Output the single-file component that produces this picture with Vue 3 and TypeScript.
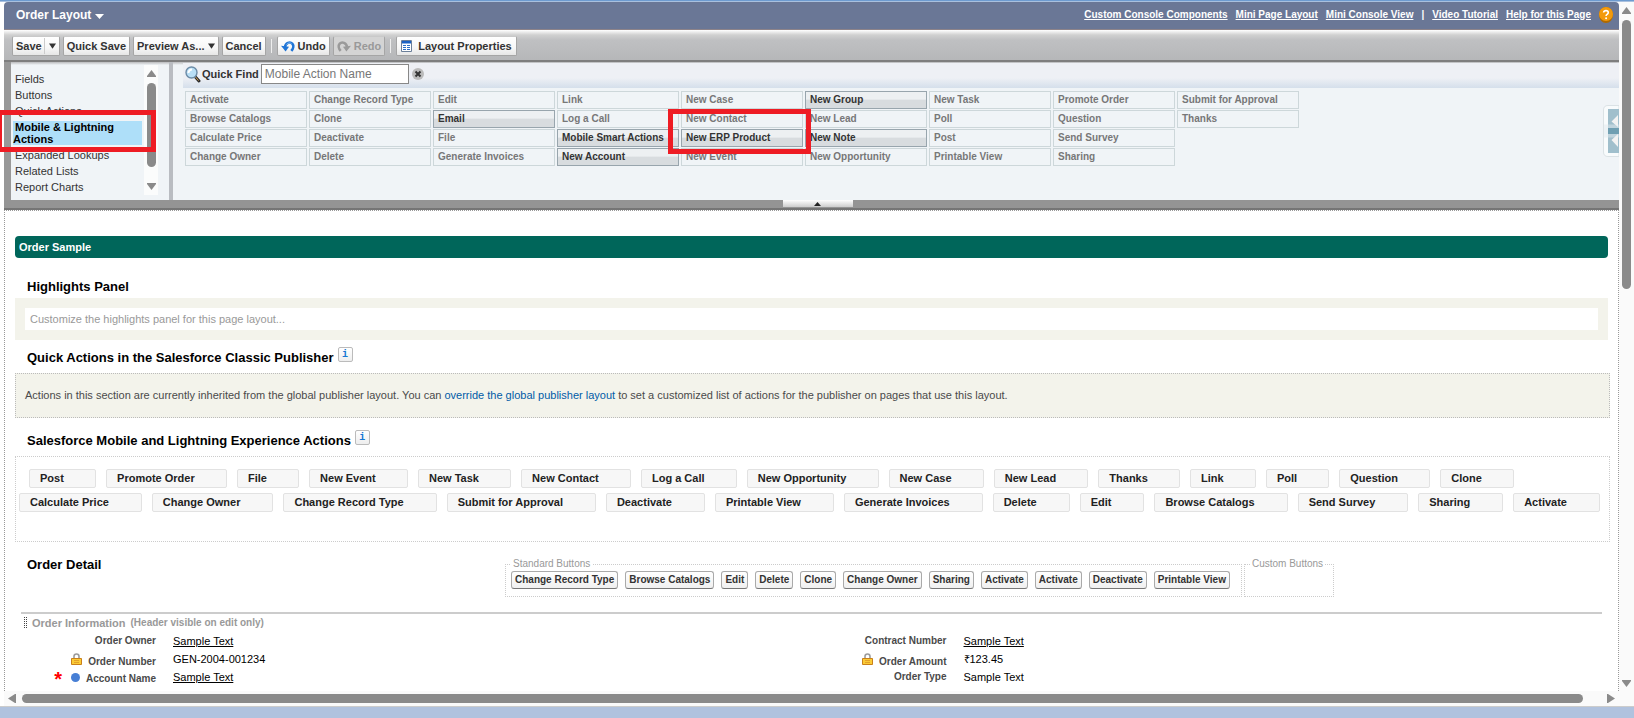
<script setup lang="ts">
import { ref } from 'vue'

interface PaletteItem {
  label: string
  available?: boolean
}

interface Field {
  label: string
  value: string
  link?: boolean
  locked?: boolean
  required?: boolean
}

const search = ref('')

const helpLinks = ['Custom Console Components', 'Mini Page Layout', 'Mini Console View']
const guideLinks = ['Video Tutorial', 'Help for this Page']

const categoriesBefore = ['Fields', 'Buttons', 'Quick Actions']
const categoriesAfter = ['Expanded Lookups', 'Related Lists', 'Report Charts']

const palette: PaletteItem[] = [
  { label: 'Activate' },
  { label: 'Browse Catalogs' },
  { label: 'Calculate Price' },
  { label: 'Change Owner' },
  { label: 'Change Record Type' },
  { label: 'Clone' },
  { label: 'Deactivate' },
  { label: 'Delete' },
  { label: 'Edit' },
  { label: 'Email', available: true },
  { label: 'File' },
  { label: 'Generate Invoices' },
  { label: 'Link' },
  { label: 'Log a Call' },
  { label: 'Mobile Smart Actions', available: true },
  { label: 'New Account', available: true },
  { label: 'New Case' },
  { label: 'New Contact' },
  { label: 'New ERP Product', available: true },
  { label: 'New Event' },
  { label: 'New Group', available: true },
  { label: 'New Lead' },
  { label: 'New Note', available: true },
  { label: 'New Opportunity' },
  { label: 'New Task' },
  { label: 'Poll' },
  { label: 'Post' },
  { label: 'Printable View' },
  { label: 'Promote Order' },
  { label: 'Question' },
  { label: 'Send Survey' },
  { label: 'Sharing' },
  { label: 'Submit for Approval' },
  { label: 'Thanks' },
]

const firstActions = [
  'Post', 'Promote Order', 'File', 'New Event', 'New Task', 'New Contact', 'Log a Call',
  'New Opportunity', 'New Case', 'New Lead', 'Thanks', 'Link', 'Poll', 'Question', 'Clone',
]
const secondActions = [
  'Calculate Price', 'Change Owner', 'Change Record Type', 'Submit for Approval', 'Deactivate',
  'Printable View', 'Generate Invoices', 'Delete', 'Edit', 'Browse Catalogs', 'Send Survey',
  'Sharing', 'Activate',
]

const standardButtons = [
  'Change Record Type', 'Browse Catalogs', 'Edit', 'Delete', 'Clone', 'Change Owner', 'Sharing',
  'Activate', 'Activate', 'Deactivate', 'Printable View',
]

const leftFields: Field[] = [
  { label: 'Order Owner', value: 'Sample Text', link: true },
  { label: 'Order Number', value: 'GEN-2004-001234', locked: true },
  { label: 'Account Name', value: 'Sample Text', link: true, required: true },
]
const rightFields: Field[] = [
  { label: 'Contract Number', value: 'Sample Text', link: true },
  { label: 'Order Amount', value: '₹123.45', locked: true },
  { label: 'Order Type', value: 'Sample Text' },
]
const columns = [leftFields, rightFields]
</script>

<template>
  <div class="window">
    <div class="strip"></div>
    <div class="viewport">
      <div class="page">
        <header class="editor">
          <div class="titlebar">
            <button class="title" type="button">
              Order Layout
              <svg width="9" height="5" viewBox="0 0 9 5"><path d="M0 0h9L4.500 5z" fill="#fff" /></svg>
            </button>
            <nav class="help">
              <a v-for="l in helpLinks" :key="l" href="#">{{ l }}</a>
              <span>|</span>
              <a v-for="l in guideLinks" :key="l" href="#">{{ l }}</a>
              <svg class="help-icon" width="14" height="16" viewBox="0 0 14 16">
                <ellipse cx="7" cy="8" rx="7" ry="8" fill="#b06a00" />
                <ellipse cx="7" cy="7" rx="7" ry="7" fill="#f39a0b" />
                <path d="M4.600 5.500Q4.800 3.600 7 3.600T9.300 5.600Q9.300 6.800 8 7.400Q7.100 7.900 7.100 9" fill="none" stroke="#fff" stroke-width="1.600" />
                <circle cx="7.100" cy="11.200" r="1" fill="#fff" />
              </svg>
            </nav>
          </div>

          <div class="toolbar">
            <div class="split">
              <button type="button">Save</button>
              <button type="button" aria-label="More save options">
                <svg width="7" height="6" viewBox="0 0 8 6"><path d="M0 0h8L4 6z" fill="#333" /></svg>
              </button>
            </div>
            <button class="tool" type="button">Quick Save</button>
            <button class="tool" type="button">
              Preview As...
              <svg width="7" height="6" viewBox="0 0 8 6"><path d="M0 0h8L4 6z" fill="#333" /></svg>
            </button>
            <button class="tool" type="button">Cancel</button>
            <i class="bar"></i>
            <button class="tool" type="button">
              <svg width="14" height="12" viewBox="0 0 14 12">
                <path d="M4 7C4.500 2.800 9 1.300 11.300 3.600C13 5.500 12.400 8.500 10.300 10.800" fill="none" stroke="#1f74d6" stroke-width="2.600" />
                <path d="M0 5.800L8 6.800L4.600 11.600z" fill="#1f74d6" />
                <path d="M5.500 4.500C7 2.700 9 2.500 10.500 3.500" fill="none" stroke="#7fb8f2" stroke-width="1" />
              </svg>
              Undo
            </button>
            <button class="tool" type="button" disabled>
              <svg width="14" height="12" viewBox="0 0 14 12">
                <path d="M10 7C9.500 2.800 5 1.300 2.700 3.600C1 5.500 1.600 8.500 3.700 10.800" fill="none" stroke="#9a9a9a" stroke-width="2.600" />
                <path d="M14 5.800L6 6.800L9.400 11.600z" fill="#9a9a9a" />
              </svg>
              Redo
            </button>
            <i class="bar"></i>
            <button class="tool wide" type="button">
              <svg width="11" height="12" viewBox="0 0 11 12">
                <path d="M.5.5h10v11H.5z" fill="#fff" stroke="#6b7f99" />
                <path d="M1 1h9v2.500H1z" fill="#1c62c4" />
                <path d="M2 5h3v1H2zM2 7h3v1H2zM2 9h3v1H2zM6 5h3v1H6zM6 7h3v1H6zM6 9h3v1H6z" fill="#2c70c8" />
              </svg>
              Layout Properties
            </button>
          </div>

          <div class="panels">
            <aside class="categories">
              <ul>
                <li v-for="c in categoriesBefore" :key="c">{{ c }}</li>
                <li class="selected">Mobile &amp; Lightning Actions</li>
                <li v-for="c in categoriesAfter" :key="c">{{ c }}</li>
              </ul>
              <div class="mini-scroll">
                <svg width="9" height="7" viewBox="0 0 9 7"><path d="M4.500 0L9 6v1H0V6z" fill="#8a8a8a" /></svg>
                <i></i>
                <svg width="9" height="7" viewBox="0 0 9 7"><path d="M4.500 7L9 1V0H0v1z" fill="#8a8a8a" /></svg>
              </div>
            </aside>
            <section class="finder">
              <div class="find">
                <svg width="16" height="17" viewBox="0 0 16 17">
                  <path d="M10 10.500l4 4.500" stroke="#2b2b2b" stroke-width="3" stroke-linecap="round" />
                  <path d="M10.500 11l3 3.500" stroke="#d9a55c" stroke-width="1" />
                  <circle cx="6.500" cy="6.500" r="5.500" fill="#b9dff6" stroke="#6c8ba6" stroke-width="1.400" />
                  <path d="M3.500 7a3.500 3.500 0 0 1 3.500-3.500" fill="none" stroke="#fff" stroke-width="2" />
                </svg>
                <label for="quick-find">Quick Find</label>
                <input id="quick-find" v-model="search" type="text" placeholder="Mobile Action Name" />
                <button class="clear" type="button" aria-label="Clear search">
                  <svg width="12" height="12" viewBox="0 0 12 12">
                    <circle cx="6" cy="6" r="6" fill="#bbb" />
                    <path d="M3.500 3.500l5 5M8.500 3.500l-5 5" stroke="#333" stroke-width="2" />
                  </svg>
                </button>
              </div>
              <div class="palette">
                <div v-for="p in palette" :key="p.label" class="cell" :class="{ available: p.available }">
                  {{ p.label }}
                </div>
              </div>
              <button class="drawer" type="button" aria-label="Open side panel">
                <svg width="16" height="52" viewBox="0 0 16 52">
                  <path d="M16 .5H5Q.5.500.5 5V47Q.5 51.500 5 51.500H16z" fill="#f8fbfc" stroke="#dbe2e5" />
                  <path d="M5 4h11v44H5z" fill="#a0bfcc" />
                  <path d="M1 19.500h15v13H1z" fill="#dfe9ed" opacity=".5" />
                  <path d="M5 23h11v6H5z" fill="#6f9fb2" />
                  <path d="M15 10v12L8.500 16.500zM15 29v13L8.500 35z" fill="#f2f2f2" />
                </svg>
              </button>
            </section>
          </div>
          <div class="footbar">
            <button class="collapse" type="button" aria-label="Collapse palette">
              <svg width="7" height="4" viewBox="0 0 7 4"><path d="M3.500 0L7 4H0z" fill="#222" /></svg>
            </button>
          </div>
        </header>

        <main class="layout">
          <div class="sample">Order Sample</div>
          <h2>Highlights Panel</h2>
          <div class="highlights"><div>Customize the highlights panel for this page layout...</div></div>

          <h2>Quick Actions in the Salesforce Classic Publisher <button class="info" type="button">i</button></h2>
          <p class="inherited">
            Actions in this section are currently inherited from the global publisher layout. You can
            <a href="#">override the global publisher layout</a>
            to set a customized list of actions for the publisher on pages that use this layout.
          </p>

          <h2>Salesforce Mobile and Lightning Experience Actions <button class="info" type="button">i</button></h2>
          <div class="actions">
            <ul class="first">
              <li v-for="a in firstActions" :key="a">{{ a }}</li>
            </ul>
            <ul>
              <li v-for="a in secondActions" :key="a">{{ a }}</li>
            </ul>
          </div>

          <div class="detail">
            <h2>Order Detail</h2>
            <fieldset class="standard">
              <legend>Standard Buttons</legend>
              <button v-for="(b, i) in standardButtons" :key="i" type="button">{{ b }}</button>
            </fieldset>
            <fieldset class="custom">
              <legend>Custom Buttons</legend>
            </fieldset>
          </div>

          <section class="information">
            <h3>
              <svg width="3" height="12" viewBox="0 0 3 12"><path d="M.5 0v12M2.500 0v12" stroke="#444" stroke-dasharray="1 1" /></svg>
              Order Information <small>(Header visible on edit only)</small>
            </h3>
            <div class="columns">
              <dl v-for="(fields, i) in columns" :key="i">
                <div v-for="f in fields" :key="f.label" class="field">
                  <dt :class="{ marked: f.locked || f.required }">
                    <span v-if="f.required" class="star">*</span>
                    <svg v-if="f.required" class="dot" width="9" height="9" viewBox="0 0 9 9"><circle cx="4.500" cy="4.500" r="4.500" fill="#477fd5" /></svg>
                    <svg v-if="f.locked" class="lock" width="11" height="12" viewBox="0 0 11 12">
                      <path d="M3 6V3.500a2.500 2.500 0 0 1 5 0V6" fill="none" stroke="#9b9b9b" stroke-width="1.600" />
                      <path d="M.5 5.500h10v6H.5z" fill="#fbcb35" stroke="#c9801a" />
                      <path d="M3 7.500h5M3 9.500h5" stroke="#e2a02a" />
                    </svg>
                    <span>{{ f.label }}</span>
                  </dt>
                  <dd><a v-if="f.link" href="#">{{ f.value }}</a><template v-else>{{ f.value }}</template></dd>
                </div>
              </dl>
            </div>
          </section>
        </main>

        <div class="h-scroll">
          <svg width="8" height="9" viewBox="0 0 8 9"><path d="M0 4.500L7 0h1v9H7z" fill="#8a8a8a" /></svg>
          <i></i>
          <svg width="8" height="9" viewBox="0 0 8 9"><path d="M8 4.500L1 0H0v9h1z" fill="#8a8a8a" /></svg>
        </div>
      </div>
      <div class="v-scroll">
        <svg width="9" height="7" viewBox="0 0 9 7"><path d="M4.500 0L9 6v1H0V6z" fill="#8a8a8a" /></svg>
        <i></i>
        <svg width="9" height="7" viewBox="0 0 9 7"><path d="M4.500 7L9 1V0H0v1z" fill="#8a8a8a" /></svg>
      </div>
    </div>
    <div class="taskbar"></div>
    <div class="mark mark-category"></div>
    <div class="mark mark-product"></div>
  </div>
</template>

<style>
body {
  margin: 0;
  background: #fff;
}
</style>

<style scoped>
.window {
  position: relative;
  display: flex;
  flex-direction: column;
  min-height: 100vh;
  overflow: hidden;
  font: 11px/16px "Liberation Sans", Arial, sans-serif;
  color: #333;
}
.window * {
  box-sizing: border-box;
}
button {
  font: inherit;
  color: inherit;
  margin: 0;
  padding: 0;
  border: 0;
  background: none;
}
ul,
dl,
dd,
h2,
h3,
p {
  margin: 0;
  padding: 0;
  list-style: none;
}
svg {
  display: block;
  flex: none;
}
.strip {
  height: 2px;
  background: #6d9bd0;
  border-bottom: 1px solid #a9c0de;
}
.viewport {
  display: flex;
  flex: 1;
}
.page {
  display: flex;
  flex: 1;
  flex-direction: column;
  min-width: 0;
  padding-left: 4px;
}
.titlebar {
  display: flex;
  align-items: center;
  justify-content: space-between;
  height: 27px;
  padding: 0 6px 2px 12px;
  border-radius: 4px 4px 0 0;
  background: #6a7796;
  color: #fff;
  font-weight: bold;
}
.title {
  display: flex;
  align-items: center;
  gap: 4px;
  font-size: 12px;
}
.title svg {
  margin-top: 4px;
}
.help {
  display: flex;
  align-items: center;
  gap: 8px;
  font-size: 10px;
}
.help a {
  color: #fff;
}
.toolbar {
  display: flex;
  align-items: center;
  gap: 3px;
  height: 33px;
  padding: 2px 8px 0;
  border-top: 1px solid #8d8389;
  border-bottom: 2px solid #7e7e7e;
  background: linear-gradient(#fff, #d0d0d0 5px, #bfc0c2 10px, #b6b7b9);
  font-weight: bold;
}
.tool,
.split {
  display: flex;
  align-items: center;
  gap: 3px;
  height: 20px;
  padding: 0 3px;
  border: 1px solid #a5a5a5;
  border-top-color: #c9c9c9;
  border-radius: 2px;
  background: linear-gradient(#fff, #f7f7f7 60%, #e6e6e6);
  font-weight: bold;
  white-space: nowrap;
}
.split {
  gap: 2px;
}
.split button + button {
  height: 16px;
  padding-left: 4px;
  border-left: 1px solid #ccc;
}
.tool:disabled {
  color: #999;
  background: #d4d4d4;
}
.tool.wide {
  gap: 6px;
  padding: 0 4px;
}
.bar {
  width: 1px;
  height: 14px;
  margin: 0 2px;
  background: #eee;
}
.panels {
  display: flex;
  height: 138px;
  border-left: 7px solid #989898;
  background: linear-gradient(#b9babc, #f0f4f7 3px);
}
.categories {
  display: flex;
  justify-content: space-between;
  width: 162px;
  padding: 3px 11px 5px 2px;
  border-right: 4px solid #b9bcc1;
}
.categories ul {
  width: 129px;
  padding-top: 6px;
}
.categories li {
  padding-left: 2px;
}
.categories .selected {
  margin: 2px 0;
  padding: 0 20px 0 0;
  background: #aedff9;
  color: #000;
  font-weight: bold;
  line-height: 12px;
  text-indent: 2px;
}
.mini-scroll {
  display: flex;
  flex-direction: column;
  align-items: center;
  width: 14px;
  padding: 5px 0;
  background: #fbfcfc;
}
.mini-scroll i {
  width: 9px;
  height: 84px;
  margin: 6px 0 auto;
  border-radius: 5px;
  background: #8a8a8a;
}
.finder {
  position: relative;
  flex: 1;
  min-width: 0;
  padding: 1px 0 0 10px;
}
.find {
  display: flex;
  align-items: center;
  height: 25px;
  padding: 0 0 3px 2px;
  background: linear-gradient(#eef0f5 60%, #d5dfeb);
}
.find label {
  margin: 0 2px 0 1px;
  font-weight: bold;
}
.find input {
  width: 148px;
  height: 20px;
  padding: 0 3px;
  border: 1px solid #888;
  background: #fff;
  font: 12px/16px "Liberation Sans", Arial, sans-serif;
}
.find input::placeholder {
  color: #777;
}
.clear {
  margin-left: 3px;
}
.palette {
  display: grid;
  grid-auto-flow: column;
  grid-template-rows: repeat(4, 18px);
  grid-auto-columns: 122px;
  gap: 1px 2px;
  padding: 3px 2px;
}
.cell {
  padding-left: 4px;
  border: 1px solid #cdd7da;
  color: #777;
  font-size: 10px;
  font-weight: bold;
  line-height: 15px;
  white-space: nowrap;
}
.cell.available {
  border-color: #98a5ad;
  background: linear-gradient(#edf0f2 45%, #d8dcdf 50%);
  color: #333;
}
.drawer {
  position: absolute;
  top: 43px;
  right: 0;
}
.footbar {
  display: flex;
  justify-content: center;
  height: 10px;
  padding-left: 12px;
  border-bottom: 2px solid #757575;
  background: #949494;
}
.collapse {
  display: flex;
  align-items: center;
  justify-content: center;
  width: 70px;
  height: 7px;
  background: linear-gradient(#fff, #ccc);
}
.layout {
  flex: 1;
  padding: 25px 8px 0 10px;
  border: 1px dotted #999;
  border-bottom: 0;
}
.sample {
  height: 22px;
  margin-right: 2px;
  padding-left: 4px;
  border-radius: 4px;
  background: #00665a;
  color: #fff;
  font-weight: bold;
  line-height: 22px;
}
h2 {
  display: flex;
  gap: 4px;
  padding-left: 12px;
  color: #000;
  font-size: 13px;
  font-weight: bold;
  line-height: 16px;
}
.sample + h2 {
  margin: 21px 0 3px;
}
.highlights {
  margin-right: 2px;
  padding: 10px;
  background: #f3f3eb;
}
.highlights div {
  padding-left: 5px;
  background: #fff;
  color: #999;
  line-height: 22px;
}
.highlights + h2 {
  margin: 10px 0 7px;
}
.info {
  align-self: flex-start;
  width: 15px;
  height: 15px;
  margin-top: -3px;
  border: 1px solid #bbb;
  border-radius: 2px;
  background: linear-gradient(#fff, #eee);
  color: #1678d3;
  font: bold 10px/12px "Liberation Mono", monospace;
}
.inherited {
  padding: 13px 9px 14px;
  border: 1px dotted #bbb;
  background: #f3f3eb;
  color: #4a4a4a;
}
.inherited a {
  color: #015ba7;
  text-decoration: none;
}
.inherited + h2 {
  margin: 15px 0 7px;
}
.actions {
  display: flex;
  flex-direction: column;
  gap: 5px;
  height: 86px;
  padding: 12px 9px 0 3px;
  border: 1px dotted #ccc;
}
.actions ul {
  display: flex;
  gap: 10px;
}
.actions .first {
  padding: 0 86px 0 10px;
}
.actions li {
  flex: 1 0 auto;
  height: 19px;
  padding: 0 28px 0 10px;
  border: 1px solid #e2e2e2;
  border-radius: 2px;
  background: #f7f7f7;
  color: #222;
  font-weight: bold;
  line-height: 16px;
  white-space: nowrap;
}
.detail {
  display: flex;
  align-items: flex-start;
  gap: 2px;
  margin-top: 15px;
}
.detail h2 {
  width: 488px;
}
fieldset {
  display: flex;
  gap: 7px;
  height: 40px;
  min-width: 0;
  margin: 0;
  padding: 0 11px 0 5px;
  border: 1px dotted #ccc;
}
fieldset.custom {
  width: 90px;
}
legend {
  padding: 0 2px;
  color: #999;
  font-size: 10px;
  line-height: 14px;
  white-space: nowrap;
}
fieldset button {
  height: 18px;
  padding: 0 3px;
  border: 1px solid #aaa;
  border-bottom-color: #777;
  border-radius: 3px;
  background: linear-gradient(#fff, #f0f0f0);
  font-size: 10px;
  font-weight: bold;
  line-height: 16px;
  white-space: nowrap;
}
.information {
  margin: 15px 8px 0 6px;
  border-top: 2px solid #ccc;
}
h3 {
  display: flex;
  align-items: center;
  gap: 5px;
  padding: 1px 0 2px 3px;
  color: #999;
  font-size: 11px;
  line-height: 16px;
}
h3 small {
  font-size: 10px;
}
.columns {
  display: flex;
}
.columns dl {
  flex: 1;
}
.field {
  display: flex;
  gap: 17px;
  height: 18px;
}
dt {
  display: flex;
  align-items: baseline;
  justify-content: flex-end;
  width: 135px;
  color: #4a4a4a;
  font-size: 10px;
  font-weight: bold;
  line-height: 16px;
}
dt.marked {
  padding-top: 2px;
}
dd {
  color: #000;
}
dd a {
  color: #000;
}
.star {
  align-self: center;
  color: #f00;
  font-size: 20px;
}
.dot {
  margin: 0 6px 0 9px;
}
.lock {
  margin-right: 6px;
}
.h-scroll {
  display: flex;
  align-items: center;
  height: 15px;
  padding: 0 4px;
  background: #fafafa;
}
.h-scroll i {
  flex: 1;
  height: 9px;
  margin: 0 24px 0 6px;
  border-radius: 5px;
  background: #8a8a8a;
}
.v-scroll {
  display: flex;
  flex-direction: column;
  align-items: center;
  width: 15px;
  padding: 5px 0 19px;
  background: #fafafa;
}
.v-scroll i {
  width: 9px;
  height: 269px;
  margin: 6px 0 auto;
  border-radius: 5px;
  background: #8a8a8a;
}
.taskbar {
  height: 12px;
  border-top: 1px solid #ccc;
  background: #b0c2de;
}
.mark {
  position: absolute;
  border: 5px solid #ee1c24;
}
.mark-category {
  top: 110px;
  left: -3px;
  width: 159px;
  height: 42px;
}
.mark-product {
  top: 109px;
  left: 668px;
  width: 143px;
  height: 45px;
}
</style>
